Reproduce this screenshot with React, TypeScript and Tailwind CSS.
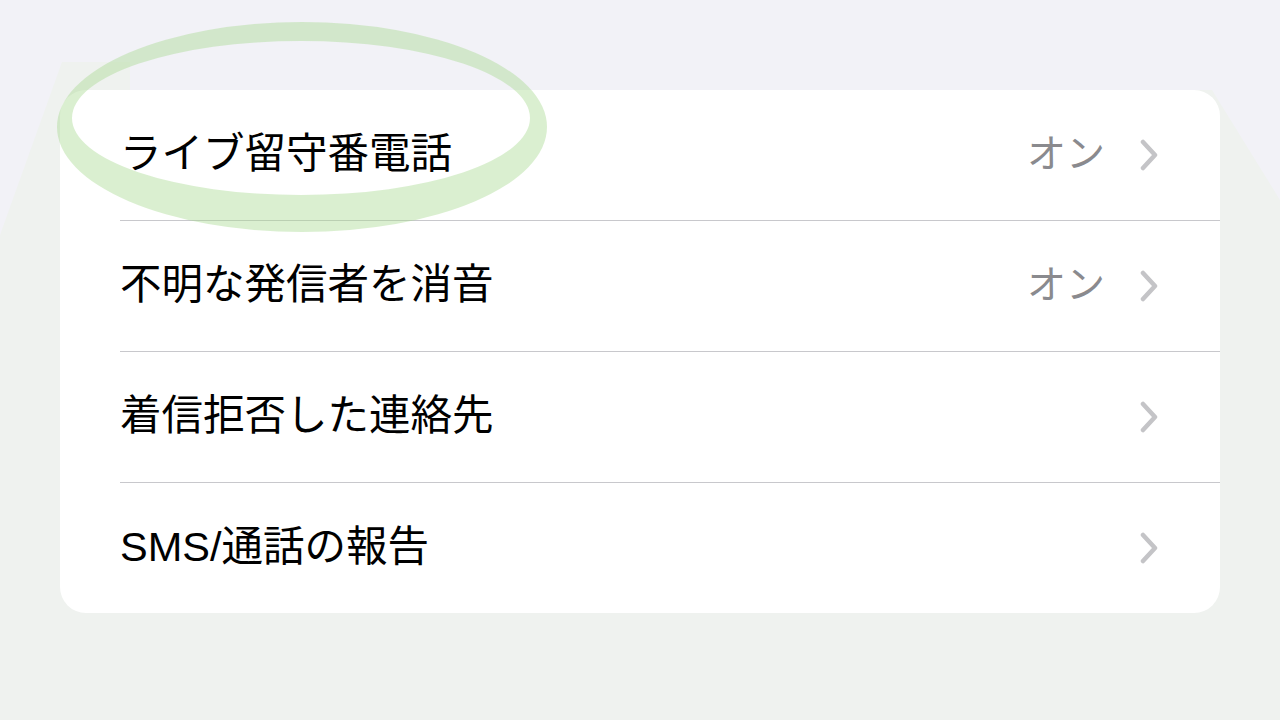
import React from "react";

type Row = { label: string; value?: string };

const rows: Row[] = [
  { label: "ライブ留守番電話", value: "オン" },
  { label: "不明な発信者を消音", value: "オン" },
  { label: "着信拒否した連絡先" },
  { label: "SMS/通話の報告" },
];

function Chevron() {
  return (
    <svg width="18" height="32" viewBox="0 0 18 32" fill="none" aria-hidden="true">
      <path d="M3 3 L15 16 L3 29" stroke="#c4c4c7" strokeWidth="4.5" strokeLinecap="round" strokeLinejoin="round" />
    </svg>
  );
}

export default function App() {
  return (
    <div
      className="relative h-[720px] w-full overflow-hidden bg-[#f2f2f7] pt-[90px]"
      style={{ fontFamily: '"Liberation Sans", "Noto Sans CJK JP", sans-serif' }}
    >
      {/* faint tinted backdrop from the capture */}
      <div className="pointer-events-none absolute inset-0 bg-[#eff2ef] [clip-path:polygon(0_235px,62px_62px,130px_62px,130px_90px,1212px_90px,1280px_200px,1280px_720px,0_720px)]" />

      <div className="relative mx-[60px] overflow-hidden rounded-[26px] bg-white">
        {rows.map((row, i) => (
          <div key={row.label}>
            <div className="flex h-[130px] items-center pl-[60px] pr-[62px]">
              <span className="flex-1 pb-[3px] text-[41.5px] leading-none text-black">{row.label}</span>
              {row.value && (
                <span className="mr-[35px] pb-[3px] text-[39px] leading-none text-[#8a8a8e]">{row.value}</span>
              )}
              <Chevron />
            </div>
            {i < rows.length - 1 && <div className="ml-[60px] h-px bg-[#c8c8cc]" />}
          </div>
        ))}
      </div>

      {/* hand-drawn highlight ring */}
      <svg className="pointer-events-none absolute left-0 top-0" width="1280" height="720" aria-hidden="true">
        <path
          fillRule="evenodd"
          fill="#a8d890"
          fillOpacity="0.42"
          d="M57 127 A245 105 0 1 0 547 127 A245 105 0 1 0 57 127 Z M72 118 A229 77 0 1 1 530 118 A229 77 0 1 1 72 118 Z"
        />
      </svg>
    </div>
  );
}
